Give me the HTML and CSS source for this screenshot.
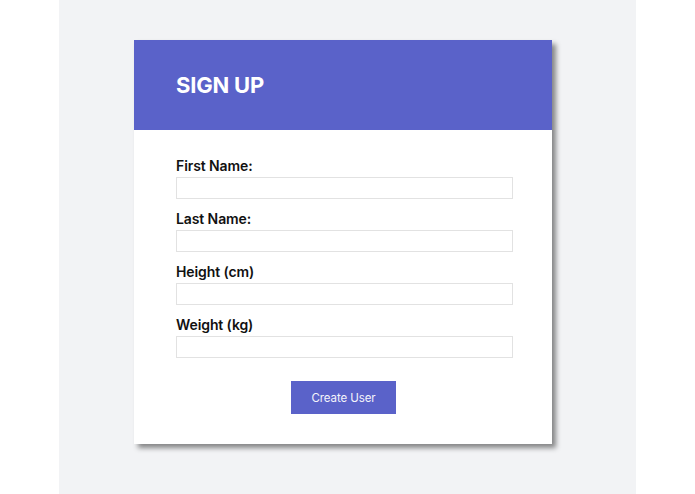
FILE: index.html
```html
<!DOCTYPE html>
<html lang="en">
<head>
    <meta charset="UTF-8">
    <meta name="viewport" content="width=device-width, initial-scale=1.0">
    <title>Sign Up</title>
    <link rel="stylesheet" href="styles.css">
</head>
<body>
    <div class="page">
        <div class="card">
            <header class="card-header">
                <h1>SIGN UP</h1>
            </header>

            <form class="signup-form">
                <div class="form-group">
                    <label for="firstName">First Name:</label>
                    <input type="text" id="firstName">
                </div>
                <div class="form-group">
                    <label for="lastName">Last Name:</label>
                    <input type="text" id="lastName">
                </div>
                <div class="form-group">
                    <label for="height">Height (cm)</label>
                    <input type="number" id="height">
                </div>
                <div class="form-group">
                    <label for="weight">Weight (kg)</label>
                    <input type="number" id="weight">
                </div>
                <div class="form-actions">
                    <button type="submit" class="btn">Create User</button>
                </div>
            </form>
        </div>
    </div>
</body>
</html>
```

FILE: styles.css
```css
:root {
    --primary-color: #5a62c9;
    --page-color: #f2f3f5;
    --border-color: #e2e2e2;
    --text-color: #111;
}

* {
    margin: 0;
    padding: 0;
    box-sizing: border-box;
}

body {
    font-family: 'Inter', 'Liberation Sans', sans-serif;
    background-color: white;
    color: var(--text-color);
}

.page {
    margin: 0 59px;
    min-height: 494px;
    padding-top: 40px;
    background-color: var(--page-color);
}

.card {
    width: 418px;
    margin-left: 75px;
    background: white;
    box-shadow: 4px 4px 5px rgba(0, 0, 0, 0.45);
}

.card-header {
    height: 90px;
    display: flex;
    align-items: center;
    padding-left: 42px;
    background-color: var(--primary-color);
}

.card-header h1 {
    color: white;
    font-size: 22px;
    font-weight: 700;
    letter-spacing: -0.2px;
}

.signup-form {
    padding: 27px 39px 30px 42px;
}

.form-group {
    margin-bottom: 11px;
}

.form-group label {
    display: block;
    font-size: 14px;
    font-weight: 600;
    line-height: 18px;
    letter-spacing: -0.1px;
    margin-bottom: 2px;
}

.form-group input {
    display: block;
    width: 100%;
    height: 22px;
    border: 1px solid var(--border-color);
    background: white;
    outline: none;
}

.form-actions {
    display: flex;
    justify-content: center;
    padding-top: 12px;
    padding-right: 2px;
}

.btn {
    width: 105px;
    height: 33px;
    border: none;
    background-color: var(--primary-color);
    color: #f4f4fb;
    font-family: inherit;
    font-size: 11.5px;
    letter-spacing: -0.1px;
    cursor: pointer;
}
```
